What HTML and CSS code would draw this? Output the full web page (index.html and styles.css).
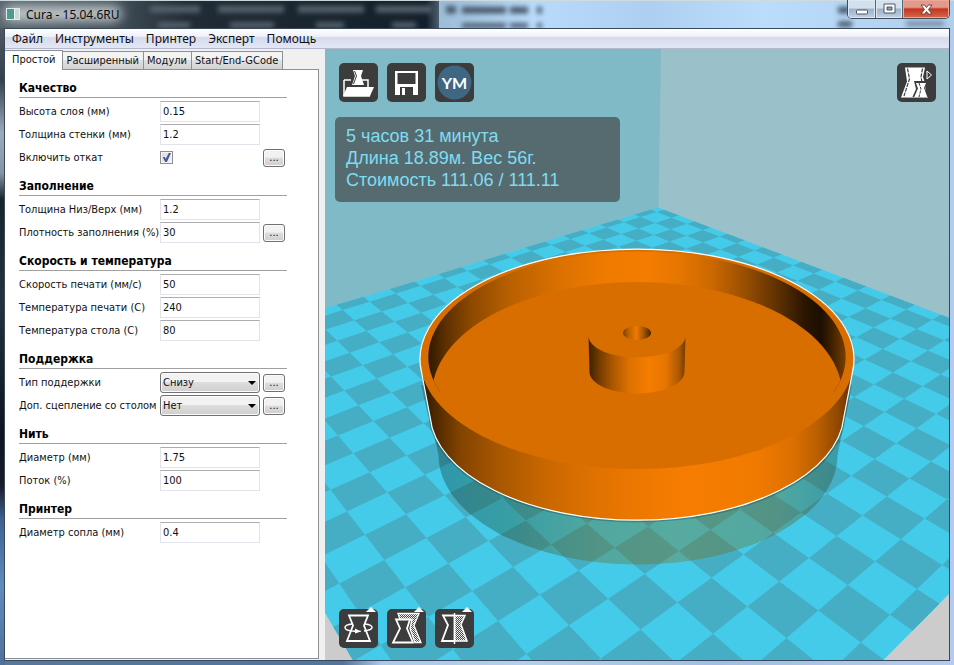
FILE: index.html
```html
<!DOCTYPE html>
<html lang="ru">
<head>
<meta charset="utf-8">
<title>Cura - 15.04.6RU</title>
<link rel="stylesheet" href="styles.css">
</head>
<body>
<div class="window">
  <header class="titlebar">
    <svg class="glass" viewBox="0 0 954 29" preserveAspectRatio="none" aria-hidden="true">
      <defs>
        <linearGradient id="glass-dark" x1="0" x2="1" y1="0" y2="0">
          <stop offset="0" stop-color="#56636c"/><stop offset=".3" stop-color="#3a4650"/><stop offset=".42" stop-color="#212c36"/><stop offset=".97" stop-color="#131f2a"/><stop offset="1" stop-color="#4c5f70"/>
        </linearGradient>
        <linearGradient id="glass-light" x1="0" x2="1" y1="0" y2="0">
          <stop offset="0" stop-color="#a3c1dc"/><stop offset=".46" stop-color="#9dbcd6"/><stop offset=".56" stop-color="#b9dbfb"/><stop offset=".68" stop-color="#aed0f0"/><stop offset=".8" stop-color="#bbdcfb"/><stop offset="1" stop-color="#b0cfec"/>
        </linearGradient>
        <filter id="soft" x="-10%" y="-60%" width="120%" height="220%"><feGaussianBlur stdDeviation="2.5"/></filter>
        <filter id="glow" x="-20%" y="-80%" width="140%" height="260%"><feGaussianBlur stdDeviation="6"/></filter>
      </defs>
      <rect width="954" height="29" fill="url(#glass-light)"/>
      <rect width="439" height="29" fill="url(#glass-dark)"/>
      <g filter="url(#glow)"><rect x="4" y="6" width="118" height="16" rx="8" fill="#c4cacd"/></g>
      <g filter="url(#soft)">
        <g fill="#56626d"><rect x="150" y="6" width="50" height="7"/><rect x="218" y="6" width="66" height="7"/><rect x="298" y="6" width="66" height="7"/><rect x="376" y="6" width="56" height="7"/><rect x="158" y="23" width="32" height="6"/><rect x="230" y="23" width="44" height="6"/><rect x="316" y="23" width="28" height="6"/><rect x="392" y="23" width="24" height="6"/></g>
        <g fill="#46586a"><rect x="446" y="6" width="10" height="8"/><rect x="462" y="7" width="44" height="7"/><rect x="510" y="7" width="18" height="7"/><rect x="537" y="7" width="5" height="7"/><rect x="462" y="24" width="44" height="5"/><rect x="510" y="24" width="18" height="5"/><rect x="537" y="24" width="5" height="5"/><rect x="838" y="7" width="12" height="7"/><rect x="838" y="22" width="14" height="6"/><rect x="906" y="22" width="38" height="5" opacity=".6"/></g>
      </g>
      <rect width="954" height="1" fill="#cfdcdf"/>
    </svg>
    <span class="app-icon"></span>
    <h1 class="title">Cura - 15.04.6RU</h1>
    <div class="window-buttons">
      <button class="wb" aria-label="Свернуть"><svg width="14" height="12" viewBox="0 0 14 12"><rect x="1.500" y="7" width="11" height="4" rx="1" fill="#fff" stroke="#4b5663"/></svg></button>
      <button class="wb wb-max" aria-label="Развернуть"><svg width="13" height="12" viewBox="0 0 13 12"><path d="M1 1h11v9H1z" fill="#fff" stroke="#4b5663"/><path d="M4 4h5v3H4z" fill="#8fa2b8" stroke="#4b5663"/></svg></button>
      <button class="wb wb-close" aria-label="Закрыть"><svg width="13" height="11" viewBox="0 0 13 11"><path d="M1 1h3.500l2 2.500L8.500 1H12L8.500 5.500 12 10H8.500l-2-2.500-2 2.500H1l3.500-4.500z" fill="#fff" stroke="#5a3a40" stroke-width=".9"/></svg></button>
    </div>
  </header>

  <div class="client">
    <nav class="menu">
      <button>Файл</button><button>Инструменты</button><button>Принтер</button><button>Эксперт</button><button>Помощь</button>
    </nav>
    <main class="work">
      <section class="side">
        <div class="tabs" role="tablist">
          <button class="tab active" role="tab" aria-selected="true">Простой</button>
          <button class="tab" role="tab">Расширенный</button>
          <button class="tab" role="tab">Модули</button>
          <button class="tab" role="tab">Start/End-GCode</button>
        </div>
        <form class="panel">
          <h2>Качество</h2>
          <div class="row"><label for="layer">Высота слоя (мм)</label><input id="layer" type="text" value="0.15"></div>
          <div class="row"><label for="wall">Толщина стенки (мм)</label><input id="wall" type="text" value="1.2"></div>
          <div class="row"><label for="retract">Включить откат</label><input id="retract" type="checkbox" checked><button type="button" class="more" aria-label="Настройки отката">...</button></div>

          <h2>Заполнение</h2>
          <div class="row"><label for="topbottom">Толщина Низ/Верх (мм)</label><input id="topbottom" type="text" value="1.2"></div>
          <div class="row"><label for="density">Плотность заполнения (%)</label><input id="density" type="text" value="30"><button type="button" class="more" aria-label="Настройки заполнения">...</button></div>

          <h2>Скорость и температура</h2>
          <div class="row"><label for="speed">Скорость печати (мм/с)</label><input id="speed" type="text" value="50"></div>
          <div class="row"><label for="temp">Температура печати (С)</label><input id="temp" type="text" value="240"></div>
          <div class="row"><label for="bedtemp">Температура стола (С)</label><input id="bedtemp" type="text" value="80"></div>

          <h2>Поддержка</h2>
          <div class="row"><label for="support">Тип поддержки</label><span class="drop"><select id="support"><option>Снизу</option></select></span><button type="button" class="more" aria-label="Настройки поддержки">...</button></div>
          <div class="row"><label for="adhesion">Доп. сцепление со столом</label><span class="drop"><select id="adhesion"><option>Нет</option></select></span><button type="button" class="more" aria-label="Настройки сцепления">...</button></div>

          <h2>Нить</h2>
          <div class="row"><label for="diameter">Диаметр (мм)</label><input id="diameter" type="text" value="1.75"></div>
          <div class="row"><label for="flow">Поток (%)</label><input id="flow" type="text" value="100"></div>

          <h2>Принтер</h2>
          <div class="row"><label for="nozzle">Диаметр сопла (мм)</label><input id="nozzle" type="text" value="0.4"></div>
        </form>
      </section>

      <section class="view">
        <svg class="scene" viewBox="325 49 624 611" preserveAspectRatio="xMidYMid slice" role="img" aria-label="Модель на столе принтера">
          <defs>
            <clipPath id="bed-clip"><path d="M658 207.500L949.500 318V593.500L883 660.500H353L324.500 612V308.500L400 286L573 233Z"/></clipPath>
            <clipPath id="inner-clip"><ellipse cx="637" cy="357" rx="208.700" ry="105.500"/></clipPath>
            <linearGradient id="wall-in" gradientUnits="userSpaceOnUse" x1="428" x2="846" y1="0" y2="0">
              <stop offset="0" stop-color="#2e1800"/><stop offset=".04" stop-color="#5a2f00"/><stop offset=".1" stop-color="#8a4800"/><stop offset=".2" stop-color="#bb6100"/><stop offset=".32" stop-color="#dc7100"/><stop offset=".42" stop-color="#ee7a00"/><stop offset=".52" stop-color="#f47d00"/><stop offset=".6" stop-color="#e67600"/><stop offset=".68" stop-color="#cb6800"/><stop offset=".76" stop-color="#984e00"/><stop offset=".84" stop-color="#5b2f00"/><stop offset=".9" stop-color="#2b1600"/><stop offset=".94" stop-color="#1c0e00"/><stop offset=".97" stop-color="#452400"/><stop offset="1" stop-color="#7a3f00"/>
            </linearGradient>
            <linearGradient id="wall-out" gradientUnits="userSpaceOnUse" x1="421" x2="853" y1="0" y2="0">
              <stop offset="0" stop-color="#2a1500"/><stop offset=".03" stop-color="#4c2700"/><stop offset=".09" stop-color="#824300"/><stop offset=".18" stop-color="#a85700"/><stop offset=".28" stop-color="#c76600"/><stop offset=".4" stop-color="#df7200"/><stop offset=".52" stop-color="#ef7900"/><stop offset=".62" stop-color="#f67d00"/><stop offset=".78" stop-color="#f07a00"/><stop offset=".86" stop-color="#dc7000"/><stop offset=".92" stop-color="#b95e00"/><stop offset=".97" stop-color="#8a4600"/><stop offset="1" stop-color="#5c2f00"/>
            </linearGradient>
            <linearGradient id="hub-side" x1="0" x2="1" y1="0" y2="0">
              <stop offset="0" stop-color="#3d1f00"/><stop offset=".1" stop-color="#6e3900"/><stop offset=".25" stop-color="#ab5800"/><stop offset=".42" stop-color="#dd7100"/><stop offset=".62" stop-color="#f57d00"/><stop offset=".8" stop-color="#e57500"/><stop offset=".93" stop-color="#ad5900"/><stop offset="1" stop-color="#743b00"/>
            </linearGradient>
            <linearGradient id="hole" x1="0" x2="1" y1="0" y2="0">
              <stop offset="0" stop-color="#7b4000"/><stop offset=".2" stop-color="#bd6200"/><stop offset=".48" stop-color="#ef7a00"/><stop offset=".75" stop-color="#a25300"/><stop offset="1" stop-color="#442300"/>
            </linearGradient>
            <linearGradient id="mirror" gradientUnits="userSpaceOnUse" x1="436" x2="838" y1="0" y2="0">
              <stop offset="0" stop-color="#002822"/><stop offset=".18" stop-color="#1c3c10"/><stop offset=".4" stop-color="#6a5c00"/><stop offset=".6" stop-color="#7c6600"/><stop offset=".85" stop-color="#6c5a04"/><stop offset="1" stop-color="#203818"/>
            </linearGradient>
          </defs>
          <rect x="325" y="49" width="624" height="611" fill="#ccc"/>
          <path d="M325 49H949V319L658 208L325 309Z" fill="#80bac6"/>
          <path d="M661 49H949V319L658.500 208Z" fill="#9ac0c9"/>
          <g clip-path="url(#bed-clip)">
            <rect x="325" y="200" width="624" height="460" fill="#45cbea"/>
            <path id="tiles" fill="#46aec4"/>
          </g>
          <path d="M425 395L438.500 455A199.500 109.500 0 0 0 837.500 455L850 395Z" fill="url(#mirror)" opacity=".32"/>
          <path d="M421 385L429 420A208.500 109 0 0 0 845.500 417L852 385Z" fill="#15484a" opacity=".34"/>
          <path d="M421.500 372A217 110 0 1 1 852.500 372L843.700 418A207 108 0 0 1 430.300 418Z" fill="url(#wall-out)"/>
          <ellipse cx="637" cy="359" rx="217" ry="110" fill="#d96e00"/>
          <g clip-path="url(#inner-clip)">
            <rect x="420" y="245" width="440" height="147" fill="url(#wall-in)"/>
            <ellipse cx="637" cy="394" rx="205" ry="112" fill="#d96e00"/>
          </g>
          <path d="M421.500 372A217 110 0 1 1 852.500 372L843.700 418A207 108 0 0 1 430.300 418Z" fill="none" stroke="#fff" stroke-width="1.200"/>
          <path d="M588.500 336A48.500 21.500 0 0 0 685.500 336L684.500 372A47.500 21.500 0 0 1 589.500 372Z" fill="url(#hub-side)"/>
          <ellipse cx="637" cy="333" rx="14" ry="7" fill="url(#hole)"/>
        </svg>

        <div class="overlay">
          <div class="tools">
            <button class="tool" aria-label="Открыть">
              <svg viewBox="0 0 39 39"><path d="M5 17v16h26" fill="none" stroke="#fff" stroke-width="1.500"/><path d="M5 17h7M23 17h6v7" fill="none" stroke="#fff" stroke-width="1.500"/><path d="M8 24h27l-4 9H4z" fill="#fff"/><path d="M14 7h10l-2 6 3 9H13l3-9z" fill="#fff"/><path d="M15.500 8l2 5-3 8" fill="none" stroke="#3c3c3c"/></svg>
            </button>
            <button class="tool" aria-label="Сохранить">
              <svg viewBox="0 0 39 39"><path d="M8 8h23v24H8z" fill="#fff"/><path d="M10.500 10h18v11h-18zM13 24h13v8H13z" fill="#3c3c3c"/><path d="M15 25h3v7h-3z" fill="#fff"/></svg>
            </button>
            <button class="tool" aria-label="YM">
              <svg viewBox="0 0 39 39"><circle cx="19.500" cy="19.500" r="17" fill="#3f6784"/></svg><span class="ym">YM</span>
            </button>
            <button class="tool tool-end" aria-label="Режим просмотра">
              <svg viewBox="0 0 39 39"><path d="M8 4.500h20l-2 9.500 2 6 1 14.500H4l6-16z" fill="#fff"/><path d="M10.500 5.500l2 10.500-5.500 17M25.500 5.500L24 14l1 5" fill="none" stroke="#3c3c3c" stroke-width="1.200" stroke-dasharray="4 1"/><path d="M17 18h13l-2 7 3 10H15l4-9z" fill="#3c3c3c"/><path d="M19 20h10l-2 5 3.500 9.500H17l4-9z" fill="#fff"/><path d="M22 20l2 6-2 8" fill="none" stroke="#3c3c3c" stroke-dasharray="3 1"/><path d="M4 34.500h27" stroke="#aaa"/><path d="M30 8l4.500 4-4.500 4z" fill="none" stroke="#fff"/></svg>
            </button>
          </div>
          <div class="stats">
            <p>5 часов 31 минута</p>
            <p>Длина 18.89м. Вес 56г.</p>
            <p>Стоимость 111.06 / 111.11</p>
          </div>
          <div class="tools tools-bottom">
            <button class="tool" aria-label="Повернуть">
              <svg viewBox="0 0 39 39"><path d="M10 6.500h19l-4 10 6 15.500H8l6-15.500z" fill="none" stroke="#fff" stroke-width="1.800"/><path d="M13 15c-5 .5-7 2-7 3.500 0 2 4 3.500 10 3.800M26 15c5 .5 7 2 7 3.500 0 2-4 3-8 3.500" fill="none" stroke="#fff" stroke-width="1.500"/><path d="M16 19.500l6 3-6 2z" fill="#fff"/><path d="M15 22.200h7" stroke="#fff"/></svg><i class="flag"></i>
            </button>
            <button class="tool" aria-label="Масштаб">
              <svg viewBox="0 0 39 39"><defs><pattern id="hatch" width="2" height="2" patternUnits="userSpaceOnUse"><rect width="2" height="2" fill="#4a4a4a"/><rect width="1" height="1" fill="#fff"/><rect x="1" y="1" width="1" height="1" fill="#ddd"/></pattern></defs><path d="M11 4.500h21l-5 12 7 17H28l-5-14 2-9H13z" fill="url(#hatch)" stroke="#fff" stroke-width="1.300"/><path d="M9 10.500h14l-3 9 6 14H6l7-14z" fill="#3c3c3c" stroke="#fff" stroke-width="1.800"/></svg><i class="flag"></i>
            </button>
            <button class="tool" aria-label="Отразить">
              <svg viewBox="0 0 39 39"><path d="M19.500 6.500H30l-4 9 6 16.500H19.500z" fill="url(#hatch)" stroke="#fff" stroke-width="1.500"/><path d="M19.500 6.500H8l5 9.500-6 16h12.500" fill="none" stroke="#fff" stroke-width="1.800"/><path d="M19.500 4v31" stroke="#fff" stroke-width="1.500"/></svg><i class="flag"></i>
            </button>
          </div>
        </div>
      </section>
    </main>
  </div>
</div>
<script src="scene.js"></script>
</body>
</html>
```

FILE: styles.css
```css
* { box-sizing: border-box; }
body {
  margin: 0;
  font-family: "DejaVu Sans Condensed", "DejaVu Sans", sans-serif;
  font-size: 11px;
  color: #111;
}
button, input, select { font: inherit; color: inherit; }
h1, h2, p { margin: 0; font-weight: normal; }

.window {
  display: flex;
  flex-direction: column;
  height: 100vh;
  background:
    linear-gradient(#5a6670, #35404d 12%, #9aabba 20%, #8496a6 26%, #16242c 30%, #22333f 45%, #0d1522 65%, #1a1a2a 73%, #3c6290 78%, #5f8cc0 88%, #50709a) left / 5px 100% no-repeat,
    linear-gradient(90deg, #56789f, #50759f 36%, #a9c9ec 40%, #b4cfee 55%, #9fbfe2 75%, #b4cbee);
}

.titlebar {
  position: relative;
  display: flex;
  align-items: center;
  height: 28px;
  padding: 0 4px 0 6px;
  flex: none;
}
.glass { position: absolute; inset: 0; width: 100%; height: 100%; }
.app-icon {
  position: relative;
  width: 14px;
  height: 12px;
  border: 1px solid #dfe9ea;
  background: linear-gradient(90deg, #4f9a8c 0 55%, #f4f8f8 55% 70%, #c9dada 70%);
}
.title {
  position: relative;
  margin-left: 6px;
  font: 12px "Noto Sans", sans-serif;
  color: #0b0b0b;
}
.window-buttons {
  position: relative;
  display: flex;
  align-self: flex-start;
  height: 19px;
  margin-left: auto;
  border: 1px solid #404a58;
  border-top: 0;
  border-radius: 0 0 5px 5px;
  overflow: hidden;
}
.wb {
  display: flex;
  align-items: center;
  justify-content: center;
  width: 28px;
  padding: 0;
  border: 0;
  border-right: 1px solid #566476;
  background: linear-gradient(#d3e1ef 45%, #9db1c7 50%, #bfd2e6);
  box-shadow: inset 0 0 0 1px #dce9f5;
}
.wb-max { width: 27px; }
.wb-close {
  width: 46px;
  border-right: 0;
  background: linear-gradient(#e39a8c 40%, #c4351f 50%, #d4684e);
  box-shadow: inset 0 0 0 1px #eba999;
}

.client {
  flex: 1;
  display: flex;
  flex-direction: column;
  min-height: 0;
  margin: 0 4px 4px;
  border: 1px solid #3a485c;
  background: #f0f0f0;
}
.menu {
  display: flex;
  flex: none;
  height: 20px;
  padding-left: 1px;
  background: linear-gradient(#fff, #eef0f8 40%, #d5daec 42%, #e3e6f5);
  border-bottom: 1px solid #b4b8cc;
}
.menu button {
  padding: 0 6px;
  border: 0;
  background: none;
  font: 12px "Noto Sans", sans-serif;
}

.work {
  flex: 1;
  display: flex;
  min-height: 0;
}
.side {
  display: flex;
  flex-direction: column;
  flex: none;
  width: 314px;
  margin-right: 6px;
  padding: 1px 0 1px;
}
.tabs {
  display: flex;
  align-items: flex-end;
  height: 19px;
}
.tab {
  height: 18px;
  padding: 0 4px 0 3px;
  border: 1px solid #8c9097;
  border-width: 1px 1px 0 0;
  background: linear-gradient(#f3f3f3 45%, #e0e0e0 50%, #d2d2d2);
  white-space: nowrap;
}
.tab.active {
  position: relative;
  height: 20px;
  margin-bottom: -1px;
  padding: 0 7px 2px;
  background: #fff;
}
.panel {
  flex: 1;
  padding: 10px 0 0 14px;
  border: 1px solid #8c9097;
  border-left: 0;
  background: #fff;
}
.panel h2 {
  width: 268px;
  height: 19px;
  margin: 9px 0 3px;
  border-bottom: 1px solid #a0a0a0;
  font-weight: bold;
  font-size: 12px;
  line-height: 19px;
  color: #000;
}
.panel h2:first-child { margin-top: -1px; }
.row {
  display: grid;
  grid-template-columns: 138px 100px 22px;
  column-gap: 3px;
  align-items: center;
  height: 21px;
  margin-bottom: 2px;
}
.row label { padding-top: 1px; white-space: nowrap; line-height: 20px; }
.row input[type="text"] {
  width: 100%;
  height: 21px;
  padding: 0 2px 1px;
  border: 1px solid #e2e3ea;
  border-top-color: #abadb3;
  background: #fff;
}
.row input[type="checkbox"] {
  appearance: none;
  width: 13px;
  height: 13px;
  margin: 0;
  border: 1px solid #8e8f8f;
  background: linear-gradient(135deg, #d5dae4, #f6f8fb);
  box-shadow: inset 0 0 0 1px #f4f4f4;
}
.row input[type="checkbox"]:checked::before {
  content: "";
  display: block;
  width: 9px;
  height: 9px;
  margin: 1px;
  background: #4a5a98;
  clip-path: polygon(8% 45%, 30% 45%, 42% 65%, 75% 0, 100% 0, 55% 100%, 35% 100%);
}
.more {
  height: 18px;
  padding: 0;
  border: 1px solid #707070;
  border-radius: 3px;
  background: linear-gradient(#f2f2f2 45%, #dddddd 50%, #cfcfcf);
  box-shadow: inset 0 0 0 1px #fbfbfb;
  line-height: 12px;
}
.drop { position: relative; display: block; }
.drop select {
  appearance: none;
  display: block;
  width: 100%;
  height: 21px;
  padding: 0 2px;
  border: 1px solid #707070;
  border-radius: 3px;
  background: linear-gradient(#f2f2f2 45%, #dddddd 50%, #cfcfcf);
  box-shadow: inset 0 0 0 1px #fbfbfb;
}
.drop::after {
  content: "";
  position: absolute;
  right: 4px;
  top: 9px;
  border: 4px solid transparent;
  border-top-color: #000;
  border-bottom: 0;
  pointer-events: none;
}

.view { position: relative; flex: 1; min-width: 0; }
.scene { position: absolute; inset: 0; width: 100%; height: 100%; display: block; }
.overlay {
  position: relative;
  display: flex;
  flex-direction: column;
  align-items: flex-start;
  height: 100%;
  padding: 14px 13px 12px 10px;
}
.tools {
  display: flex;
  gap: 9px;
  align-self: stretch;
  padding-left: 4px;
}
.tools-bottom { margin-top: auto; }
.tool {
  position: relative;
  width: 39px;
  height: 39px;
  padding: 0;
  border: 0;
  border-radius: 5px;
  background: #3c3c3c;
}
.tool svg { display: block; width: 39px; height: 39px; }
.tool-end { margin-left: auto; }
.ym {
  position: absolute;
  inset: 0;
  font: bold 16px/39px Lato, sans-serif;
  color: #fff;
}
.flag {
  position: absolute;
  top: -2px;
  right: 2px;
  border: 5px solid transparent;
  border-bottom-color: #fff;
  border-top: 0;
}
.stats {
  width: 285px;
  height: 85px;
  margin-top: 15px;
  padding: 8px 11px;
  border-radius: 5px;
  background: #566b6f;
  font: 18px/22px "Liberation Sans", sans-serif;
  color: #7fdcf2;
}
```

FILE: scene.js
```js
// Perspective chequerboard of the printer bed.
// Grid nodes (column, row) and where they land in scene units;
// the projection is the least-squares fit through them.
const nodes = [
  [-8, 5, 331, 489.3], [-10, 3, 372.7, 420.7], [-8, 3, 407.3, 455.7],
  [-5, 5, 384, 560], [-2, 4, 497.7, 621.3], [-4, 3, 489, 541.7],
  [-1, 2, 608.3, 599], [0, 3, 600.7, 658.3], [0, 0, 711.3, 578.3],
  [-1, -1, 710, 529.3], [2, 0, 786.3, 638.3], [3, -1, 861, 642.3],
  [1, -3, 836.7, 536], [0, -4, 826.7, 493.7], [3, -4, 941.7, 564.3],
  [0, -6, 875, 459.3], [0, -8, 916.7, 427.7], [-1, -8, 885, 412],
  [-2, -9, 874.3, 384.3], [-2, -10, 894.3, 372.3], [-3, -10, 864, 360],
  [-3, -11, 881.7, 349.3]
];

function solve(m) {
  const n = m.length;
  for (let c = 0; c < n; c++) {
    let p = c;
    for (let r = c + 1; r < n; r++) if (Math.abs(m[r][c]) > Math.abs(m[p][c])) p = r;
    [m[c], m[p]] = [m[p], m[c]];
    for (let r = 0; r < n; r++) {
      if (r === c) continue;
      const f = m[r][c] / m[c][c];
      for (let k = c; k <= n; k++) m[r][k] -= f * m[c][k];
    }
  }
  return m.map((row, i) => row[n] / row[i]);
}

const normal = Array.from({ length: 8 }, () => new Array(9).fill(0));
for (const [u, v, x, y] of nodes) {
  for (const eq of [
    [u, v, 1, 0, 0, 0, -u * x, -v * x, x],
    [0, 0, 0, u, v, 1, -u * y, -v * y, y]
  ]) {
    for (let i = 0; i < 8; i++) for (let k = 0; k < 9; k++) normal[i][k] += eq[i] * eq[k];
  }
}
const h = solve(normal);

function project(u, v) {
  const w = h[6] * u + h[7] * v + 1;
  return w > 0.05 ? [(h[0] * u + h[1] * v + h[2]) / w, (h[3] * u + h[4] * v + h[5]) / w] : null;
}

let d = "";
for (let u = -30; u < 12; u++) {
  for (let v = -30; v < 14; v++) {
    if ((u + v) % 2) continue;
    const q = [project(u, v), project(u + 1, v), project(u + 1, v + 1), project(u, v + 1)];
    if (q.includes(null)) continue;
    d += "M" + q.map(p => p[0].toFixed(1) + " " + p[1].toFixed(1)).join("L") + "Z";
  }
}
document.getElementById("tiles").setAttribute("d", d);
```
